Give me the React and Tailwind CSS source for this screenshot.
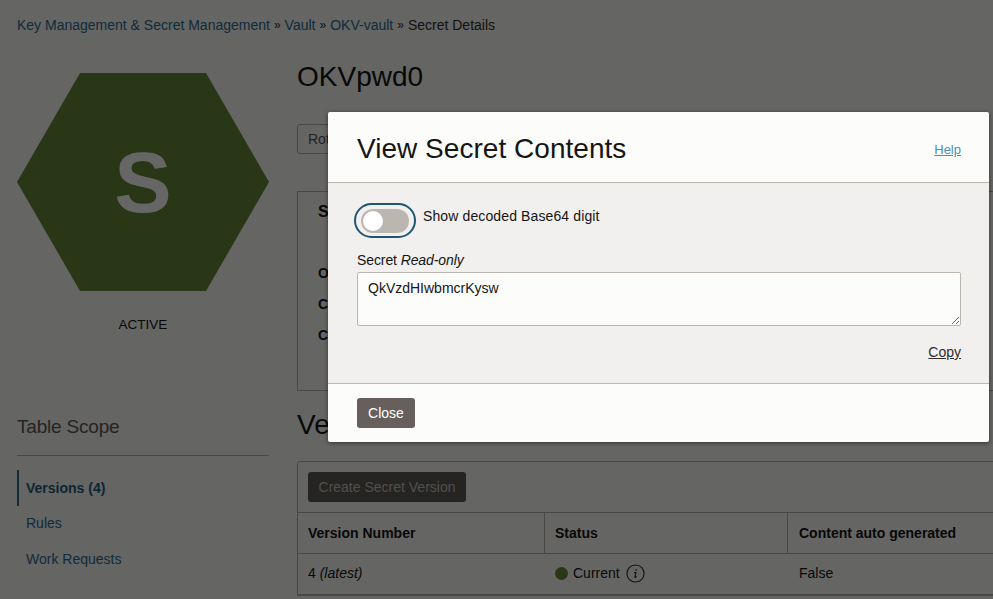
const font = { fontFamily: '"Liberation Sans", Arial, sans-serif' };

function InfoIcon() {
  return (
    <svg width="19" height="19" viewBox="0 0 20 20" fill="none" className="shrink-0 ml-px">
      <circle cx="10" cy="10" r="9" stroke="#312d2a" strokeWidth="1.2" />
      <path d="M10.6 5.7v.9M8.8 9h1.7l-1.2 4.6c-.1.5.4.8 1.6-.3" stroke="#312d2a" strokeWidth="1.2" strokeLinecap="round" strokeLinejoin="round" />
    </svg>
  );
}

function Crumb({ children }) {
  return (
    <>
      <a href="#" className="text-[#2a6e92]">{children}</a>
      <span className="mx-[4px] text-[#312d2a] text-[12px]">»</span>
    </>
  );
}

function SideColumn() {
  return (
    <div className="w-[252px] shrink-0">
      <div className="h-[218px] bg-[#6a8a3a] flex items-center justify-center [clip-path:polygon(25%_0,75%_0,100%_50%,75%_100%,25%_100%,0_50%)]">
        <span className="text-white font-bold text-[86px] leading-none">S</span>
      </div>
      <div className="mt-[26px] text-center text-[13.5px] leading-4 text-[#161513]">ACTIVE</div>

      <h3 className="mt-[82px] text-[19px] tracking-[-0.2px] leading-6 text-[#5f5b56] pb-[16px] border-b border-[#b8b4ae]">Table Scope</h3>
      <div className="mt-[14px] flex flex-col text-sm">
        <a href="#" className="h-[36px] flex items-center pl-[7px] border-l-2 border-[#2a6e92] font-bold text-[#1f5f80]">Versions (4)</a>
        <a href="#" className="h-[35px] pb-px flex items-center pl-[9px] text-[#2a6e92]">Rules</a>
        <a href="#" className="h-[36px] flex items-center pl-[9px] text-[#2a6e92]">Work Requests</a>
      </div>
    </div>
  );
}

function MainColumn() {
  return (
    <div className="flex-1 min-w-0 -mr-[40px]">
      <h1 className="text-[28px] leading-8 text-[#161513] mt-[-12px]">OKVpwd0</h1>
      <div className="mt-[31px]">
        <button className="h-[30px] w-[120px] px-[10px] text-left text-sm text-[#5f5b56] border border-[#b8b4ae] rounded-[3px]">Rotate</button>
      </div>
      <div className="mt-[37px] h-[200px] border border-[#b8b4ae] pl-[20px] pt-[10px] text-sm text-[#161513] font-bold">
        <div className="text-base leading-5">Secret Information</div>
        <div className="mt-[36px] leading-[31px]">OCID</div>
        <div className="leading-[31px]">Created</div>
        <div className="leading-[31px]">Compartment</div>
      </div>
      <h2 className="mt-[18px] text-[28px] leading-8 text-[#161513]">Versions</h2>
      <div className="mt-[20px] border border-[#b8b4ae] rounded-tl-[3px] text-sm text-[#161513]">
        <div className="h-[51px] px-[10px] flex items-center border-b border-[#b8b4ae]">
          <button className="h-[30px] w-[158px] bg-[#5f5b56] text-[#c8c4be] rounded-[3px]">Create Secret Version</button>
        </div>
        <div className="grid grid-cols-[247px_243px_1fr] h-[41px] items-stretch font-bold border-b border-[#b8b4ae]">
          <div className="flex items-center px-[10px] border-r border-[#b8b4ae]">Version Number</div>
          <div className="flex items-center px-[10px] border-r border-[#b8b4ae]">Status</div>
          <div className="flex items-center px-[11px]">Content auto generated</div>
        </div>
        <div className="grid grid-cols-[247px_243px_1fr] h-[41px] pb-[2px] items-center border-b border-[#b8b4ae]">
          <div className="px-[10px]">4 <i>(latest)</i></div>
          <div className="px-[10px] flex items-center gap-[5px]">
            <span className="w-[13px] h-[13px] rounded-full bg-[#6a8a3a]" />
            <span>Current</span>
            <InfoIcon />
          </div>
          <div className="px-[11px]">False</div>
        </div>
      </div>
    </div>
  );
}

function SecretModal() {
  return (
    <div className="absolute left-[328px] top-[112px] w-[661px] bg-[#fcfcfb] rounded-[2px] shadow-[0_1px_4px_rgba(0,0,0,0.5)] text-[#161513] text-sm">
      <div className="h-[71px] pl-[29px] pr-[28px] pt-[3px] flex items-center justify-between border-b border-[#bcb6b1]">
        <h2 className="text-[28px] leading-8 tracking-[0.03px]">View Secret Contents</h2>
        <a href="#" className="mt-[3px] text-[13px] text-[#4d8fb5] underline">Help</a>
      </div>
      <div className="h-[201px] bg-[#f1f0ef] px-[29px] pr-[28px] pt-[20px] border-b border-[#bcb6b1]">
        <div className="flex items-center gap-[7px]">
          <button className="w-[62px] h-[35px] -ml-[3px] shrink-0 rounded-full border-2 border-[#1f5670] flex items-center justify-center">
            <span className="w-[48px] h-[24px] rounded-full bg-[#bcb6b1] flex items-center pl-[2px]">
              <span className="w-[20px] h-[20px] rounded-full bg-white" />
            </span>
          </button>
          <span className="-mt-[10px] tracking-[0.12px]">Show decoded Base64 digit</span>
        </div>
        <label className="block mt-[14px] text-sm tracking-[-0.1px] leading-4">Secret <i>Read-only</i></label>
        <textarea
          readOnly
          defaultValue="QkVzdHIwbmcrKysw"
          className="block mt-[4px] w-full h-[54px] px-[10px] py-[6px] bg-[#fcfcfb] border border-[#bcb6b1] rounded-[2px] text-sm leading-[18px] outline-none"
        />
        <div className="mt-[16px] text-right">
          <a href="#" className="text-[#312d2a] underline">Copy</a>
        </div>
      </div>
      <div className="h-[58px] pl-[29px] pt-[14px]">
        <button className="h-[30px] w-[58px] bg-[#665f5b] text-white rounded-[3px]">Close</button>
      </div>
    </div>
  );
}

export default function App() {
  return (
    <div style={font} className="relative w-[993px] h-[599px] overflow-hidden bg-[#fcfcfb]">
      <div className="px-[17px] pt-[17px] text-sm">
        <nav className="h-[16px] leading-4 flex items-center">
          <Crumb>Key Management &amp; Secret Management</Crumb>
          <Crumb>Vault</Crumb>
          <Crumb>OKV-vault</Crumb>
          <span className="text-[#312d2a]">Secret Details</span>
        </nav>
        <div className="mt-[40px] flex gap-[28px]">
          <SideColumn />
          <MainColumn />
        </div>
      </div>
      <div className="absolute inset-0 bg-black/60" />
      <SecretModal />
    </div>
  );
}
